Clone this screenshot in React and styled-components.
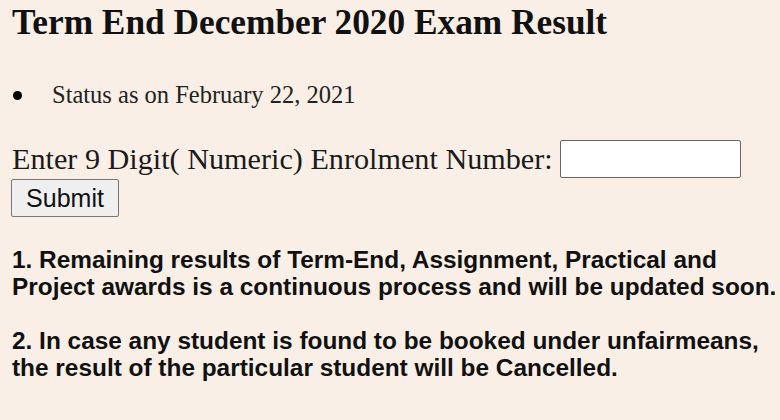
import React from "react";
import styled, { createGlobalStyle } from "styled-components";

const Global = createGlobalStyle`
  html, body { margin: 0; padding: 0; background: #f9efe6; }
  body { font-family: "Liberation Serif", "Times New Roman", serif; color: #000; }
`;

const Page = styled.div`
  padding: 5px 12px 0 12px;
  width: 780px;
  height: 420px;
  box-sizing: border-box;
  overflow: hidden;
`;

const Title = styled.h1`
  font-family: "Liberation Serif", serif;
  font-weight: bold;
  font-size: 35.3px;
  line-height: 36px;
  margin: 0;
  color: #111;
`;

const StatusList = styled.ul`
  list-style: none;
  margin: 41px 0 0 0;
  padding: 0;
  font-size: 24.5px;
  line-height: 26px;
  color: #222;
`;

const StatusItem = styled.li`
  display: flex;
  align-items: center;
  gap: 30px;
  &::before {
    content: "";
    width: 9px;
    height: 9px;
    border-radius: 50%;
    background: #000;
    margin-left: 1px;
  }
`;

const Form = styled.form`
  margin-top: 32px;
`;

const Label = styled.label`
  font-size: 30.2px;
  line-height: 38px;
  color: #1a1a1a;
`;

const TextInput = styled.input`
  width: 181px;
  height: 38px;
  box-sizing: border-box;
  border: 1.5px solid #666;
  border-radius: 2px;
  background: #fff;
  margin-left: 7px;
  vertical-align: bottom;
`;

const SubmitButton = styled.button`
  display: block;
  margin-top: 1px;
  margin-left: -1px;
  font-family: "Liberation Sans", Arial, sans-serif;
  font-size: 25px;
  height: 38px;
  width: 108px;
  padding: 0;
  background: #efeff0;
  border: 1.5px solid #777;
  border-radius: 2px;
  color: #111;
`;

const Notes = styled.div`
  margin-top: 29px;
  font-family: "Liberation Sans", Arial, sans-serif;
  font-weight: bold;
  font-size: 24.4px;
  line-height: 27px;
  color: #111;
`;

const Note = styled.p`
  margin: 0 0 27px 0;
  white-space: nowrap;
`;

export default function App() {
  return (
    <Page>
      <Global />
      <Title>Term End December 2020 Exam Result</Title>
      <StatusList>
        <StatusItem>Status as on February 22, 2021</StatusItem>
      </StatusList>
      <Form onSubmit={(e) => e.preventDefault()}>
        <Label>
          Enter 9 Digit( Numeric) Enrolment Number:
          <TextInput type="text" />
        </Label>
        <SubmitButton type="submit">Submit</SubmitButton>
      </Form>
      <Notes>
        <Note>
          1. Remaining results of Term-End, Assignment, Practical and
          <br />
          Project awards is a continuous process and will be updated soon.
        </Note>
        <Note>
          2. In case any student is found to be booked under unfairmeans,
          <br />
          the result of the particular student will be Cancelled.
        </Note>
      </Notes>
    </Page>
  );
}
